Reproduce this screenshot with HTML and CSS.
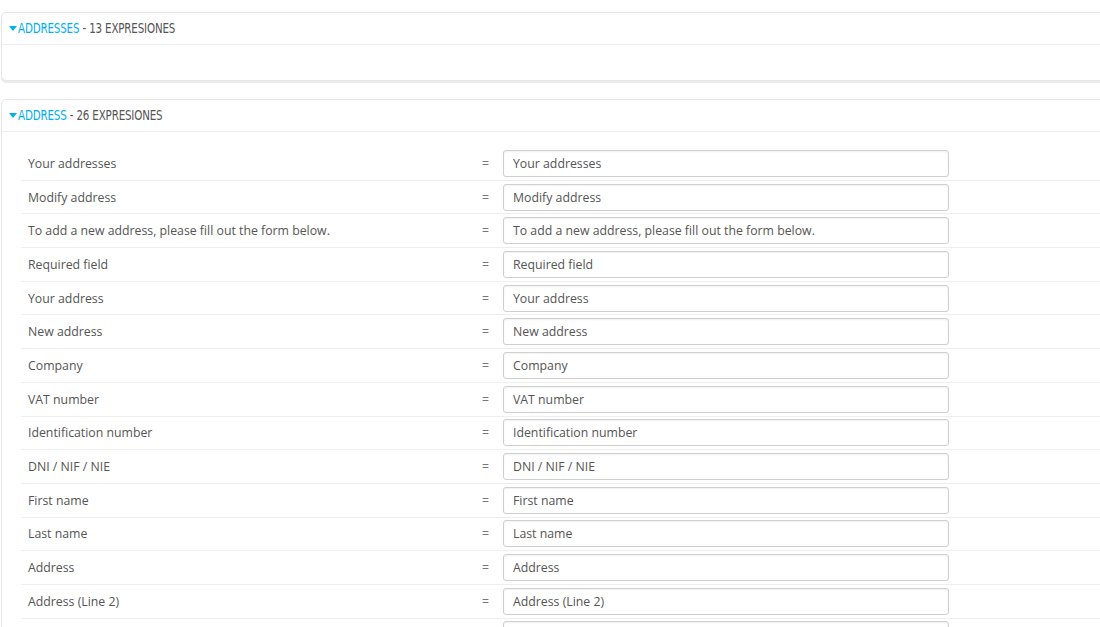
FILE: index.html
```html
<!DOCTYPE html>
<html lang="es">
<head>
    <meta charset="UTF-8">
    <title>Traducciones - Addresses</title>
    <link rel="stylesheet" href="styles.css">
</head>
<body>
    <div class="panel">
        <div class="panel-heading">
            <span class="caret"></span><span class="title"><a class="group-name">Addresses</a> - 13 expresiones</span>
        </div>
        <div class="panel-body short"></div>
    </div>

    <div class="panel">
        <div class="panel-heading">
            <span class="caret"></span><span class="title"><a class="group-name">Address</a> - 26 expresiones</span>
        </div>
        <div class="translations">
            <div class="row"><span class="src">Your addresses</span><span class="eq">=</span><input type="text" value="Your addresses"></div>
            <div class="row"><span class="src">Modify address</span><span class="eq">=</span><input type="text" value="Modify address"></div>
            <div class="row"><span class="src">To add a new address, please fill out the form below.</span><span class="eq">=</span><input type="text" value="To add a new address, please fill out the form below."></div>
            <div class="row"><span class="src">Required field</span><span class="eq">=</span><input type="text" value="Required field"></div>
            <div class="row"><span class="src">Your address</span><span class="eq">=</span><input type="text" value="Your address"></div>
            <div class="row"><span class="src">New address</span><span class="eq">=</span><input type="text" value="New address"></div>
            <div class="row"><span class="src">Company</span><span class="eq">=</span><input type="text" value="Company"></div>
            <div class="row"><span class="src">VAT number</span><span class="eq">=</span><input type="text" value="VAT number"></div>
            <div class="row"><span class="src">Identification number</span><span class="eq">=</span><input type="text" value="Identification number"></div>
            <div class="row"><span class="src">DNI / NIF / NIE</span><span class="eq">=</span><input type="text" value="DNI / NIF / NIE"></div>
            <div class="row"><span class="src">First name</span><span class="eq">=</span><input type="text" value="First name"></div>
            <div class="row"><span class="src">Last name</span><span class="eq">=</span><input type="text" value="Last name"></div>
            <div class="row"><span class="src">Address</span><span class="eq">=</span><input type="text" value="Address"></div>
            <div class="row"><span class="src">Address (Line 2)</span><span class="eq">=</span><input type="text" value="Address (Line 2)"></div>
            <div class="row"><span class="src"></span><span class="eq"></span><input type="text" value=""></div>
        </div>
    </div>
</body>
</html>
```

FILE: styles.css
```css
body {
    margin: 0;
    padding: 12px 0 0 1px;
    background: #fff;
    font-family: 'Open Sans', sans-serif;
    font-size: 12.3px;
    color: #555;
    overflow: hidden;
}
.panel {
    width: 1130px;
    margin-bottom: 18px;
    border: 1px solid #e6e6e6;
    border-radius: 5px;
    box-shadow: 0 2px 0 rgba(0, 0, 0, 0.08);
    background: #fff;
}
.panel-heading {
    height: 31px;
    line-height: 31px;
    padding-left: 7px;
    border-bottom: 1px solid #eee;
    font-family: 'DejaVu Sans', sans-serif;
    font-size: 14px;
    text-transform: uppercase;
    color: #555;
    white-space: nowrap;
}
.title {
    display: inline-block;
    transform: scaleX(0.735);
    transform-origin: left center;
    letter-spacing: -0.2px;
}
.caret {
    display: inline-block;
    width: 0;
    height: 0;
    margin-right: 1px;
    vertical-align: 2px;
    border-left: 4px solid transparent;
    border-right: 4px solid transparent;
    border-top: 5px solid #00aff0;
}
.group-name {
    color: #00aff0;
}
.panel-body.short {
    height: 35px;
}
.translations {
    padding: 15px 0 0 19px;
}
.row {
    display: flex;
    align-items: center;
    height: 33.7px;
    box-sizing: border-box;
    border-bottom: 1px solid #eee;
}
.src {
    width: 455px;
    padding-left: 7px;
    box-sizing: border-box;
}
.eq {
    width: 27px;
    padding-left: 6px;
    box-sizing: border-box;
    color: #777;
}
.row input {
    width: 446px;
    height: 27px;
    box-sizing: border-box;
    padding: 0 9px;
    border: 1px solid #cfcfcf;
    border-radius: 3px;
    font-family: 'Open Sans', sans-serif;
    font-size: 12.3px;
    color: #555;
    box-shadow: inset 0 1px 2px rgba(0, 0, 0, 0.06);
}
```
